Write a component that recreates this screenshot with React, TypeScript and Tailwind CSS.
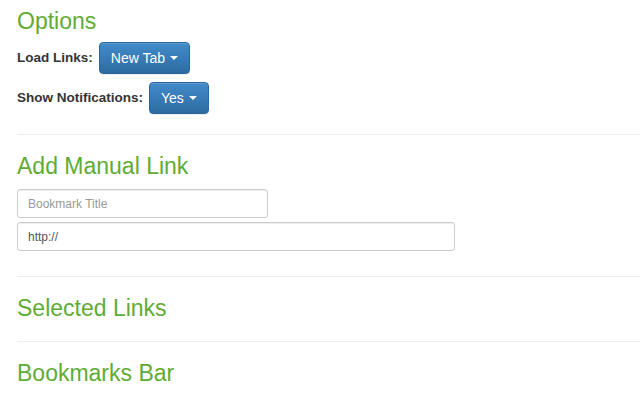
const Caret = () => (
  <span className="ml-[5px] inline-block h-0 w-0 border-x-[4px] border-t-[4px] border-x-transparent border-t-white align-middle" />
);

const DropdownButton = ({ label }: { label: string }) => (
  <button
    type="button"
    className="flex h-[32px] items-center rounded-[4px] border border-[#2b669a] bg-gradient-to-b from-[#428bca] to-[#2d6ca2] px-[11px] text-[14px] text-white shadow-[inset_0_1px_0_rgba(255,255,255,0.15),0_1px_1px_rgba(0,0,0,0.075)]"
  >
    {label}
    <Caret />
  </button>
);

const OptionRow = ({ label, value }: { label: string; value: string }) => (
  <div className="mt-[8px] flex items-center">
    <span className="text-[13.5px] font-bold text-[#333]">{label}</span>
    <span className="ml-[6px]">
      <DropdownButton label={value} />
    </span>
  </div>
);

const Heading = ({ children, className }: { children: string; className?: string }) => (
  <h3 className={`h-[25px] text-[23px] leading-[25px] text-[#5fac34] ${className ?? ""}`}>
    {children}
  </h3>
);

const Divider = ({ className }: { className?: string }) => (
  <hr className={`border-0 border-t border-[#eee] ${className ?? ""}`} />
);

export default function App() {
  return (
    <div className="min-h-[400px] bg-white pl-[17px] font-['Liberation_Sans',Arial,sans-serif]">
      {/* Options */}
      <Heading className="mt-[9px]">Options</Heading>
      <OptionRow label="Load Links:" value="New Tab" />
      <OptionRow label="Show Notifications:" value="Yes" />

      <Divider className="mt-[20px]" />

      {/* Add Manual Link */}
      <Heading className="mt-[19px]">Add Manual Link</Heading>
      <div className="mt-[10px] flex flex-col gap-[4px]">
        <input
          className="h-[29px] w-[251px] rounded-[3px] border border-[#ccc] px-[10px] text-[12px] text-[#555] placeholder:text-[#999] shadow-[inset_0_1px_1px_rgba(0,0,0,0.075)] outline-none"
          placeholder="Bookmark Title"
        />
        <input
          className="h-[29px] w-[438px] rounded-[3px] border border-[#ccc] px-[10px] text-[12px] text-[#555] shadow-[inset_0_1px_1px_rgba(0,0,0,0.075)] outline-none"
          defaultValue="http://"
        />
      </div>

      <Divider className="mt-[25px]" />

      {/* Selected Links */}
      <Heading className="mt-[19px]">Selected Links</Heading>

      <Divider className="mt-[20px]" />

      {/* Bookmarks Bar */}
      <Heading className="mt-[19px]">Bookmarks Bar</Heading>
    </div>
  );
}
